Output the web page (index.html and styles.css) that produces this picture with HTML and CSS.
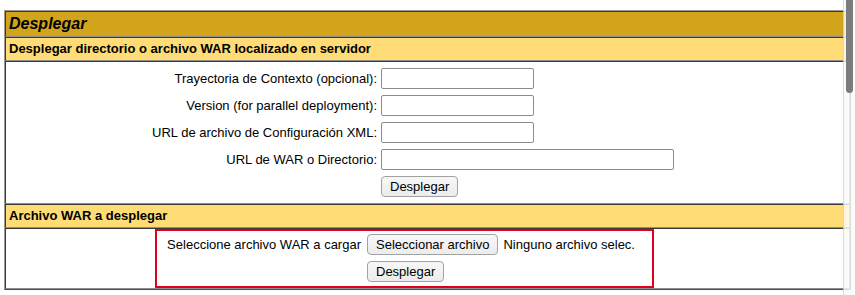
FILE: index.html
```html
<!DOCTYPE html>
<html lang="es">
<head>
    <meta charset="UTF-8">
    <meta name="viewport" content="width=device-width, initial-scale=1.0">
    <title>Gestor de Aplicaciones Web de Tomcat</title>
    <link rel="stylesheet" href="styles.css">
</head>
<body>
    <table class="manager">
        <tr><td class="title">Desplegar</td></tr>
        <tr><td class="header-left">Desplegar directorio o archivo WAR localizado en servidor</td></tr>
        <tr>
            <td class="row-body">
                <form class="fields server-form">
                    <label class="row-right" for="deployPath">Trayectoria de Contexto (opcional):</label>
                    <div class="row-left"><input type="text" id="deployPath" class="text-in"></div>
                    <label class="row-right" for="deployVersion">Version (for parallel deployment):</label>
                    <div class="row-left"><input type="text" id="deployVersion" class="text-in"></div>
                    <label class="row-right" for="deployConfig">URL de archivo de Configuración XML:</label>
                    <div class="row-left"><input type="text" id="deployConfig" class="text-in"></div>
                    <label class="row-right" for="deployWar">URL de WAR o Directorio:</label>
                    <div class="row-left"><input type="text" id="deployWar" class="text-in wide"></div>
                    <span class="row-right"></span>
                    <div class="row-left"><button type="button" class="btn">Desplegar</button></div>
                </form>
            </td>
        </tr>
        <tr><td class="header-left">Archivo WAR a desplegar</td></tr>
        <tr>
            <td class="row-body upload-cell">
                <form class="fields upload-form">
                    <span class="row-right">Seleccione archivo WAR a cargar</span>
                    <div class="row-left file-pick">
                        <button type="button" class="btn">Seleccionar archivo</button>
                        <span class="file-name">Ninguno archivo selec.</span>
                    </div>
                    <span class="row-right"></span>
                    <div class="row-left"><button type="button" class="btn">Desplegar</button></div>
                </form>
            </td>
        </tr>
    </table>

    <div class="scroll-track"><div class="scroll-thumb"></div></div>
</body>
</html>
```

FILE: styles.css
```css
body {
    margin: 10px 4px 0 4px;
    font-family: "Liberation Sans", Arial, sans-serif;
    font-size: 13px;
    color: #000;
    background: #fff;
}

.manager {
    width: 100%;
    border-collapse: separate;
    border-spacing: 0;
    border: 1px solid;
    border-color: #9a9a9a #505050 #505050 #9a9a9a;
}
.manager td {
    padding: 3px;
    border: 1px solid;
    border-color: #3a3a3a #8e8e8e #8e8e8e #3a3a3a;
    text-align: left;
    vertical-align: top;
}
td.title {
    background: #D2A41C;
    font-size: 16px;
    line-height: 18px;
    font-weight: bold;
    font-style: italic;
}
td.header-left {
    background: #FFDC75;
    font-weight: bold;
    line-height: 16px;
}
td.row-body {
    background: #fff;
}
td.upload-cell {
    padding: 0 3px 0 0;
}

.fields {
    display: grid;
    margin: 0;
}
.server-form {
    grid-template-columns: 239px 299px;
    margin-left: 132px;
}
.server-form .row-left {
    padding-left: 1px;
}
.upload-form {
    grid-template-columns: 205px auto;
    width: 493px;
    margin-left: 149px;
    padding: 0 0 1px 2px;
    border: 2px solid #e0001b;
}
.row-right,
.row-left {
    display: flex;
    align-items: center;
    height: 21px;
    padding: 3px;
}
.row-right {
    justify-content: flex-end;
}

.text-in {
    box-sizing: border-box;
    width: 153px;
    height: 21px;
    margin: 0;
    border: 1px solid #8c8c8c;
    border-radius: 2px;
    background: #fff;
}
.text-in.wide {
    width: 293px;
}

.btn {
    box-sizing: border-box;
    height: 21px;
    margin: 0;
    padding: 0 8px;
    font-family: "Liberation Sans", Arial, sans-serif;
    font-size: 13px;
    color: #000;
    background: linear-gradient(#f7f7f7, #ececec);
    border: 1px solid #a2a2a2;
    border-radius: 4px;
}
.file-pick {
    gap: 5px;
}

/* overlay scrollbar of the window */
.scroll-track {
    position: fixed;
    top: 0;
    right: 0;
    width: 11px;
    height: 100%;
    background: rgba(250, 250, 250, 0.82);
    border-left: 1px solid rgba(0, 0, 0, 0.13);
}
.scroll-thumb {
    position: absolute;
    top: 0;
    left: 2px;
    width: 7px;
    height: 93px;
    background: #7b7b7b;
    border-radius: 0 0 4px 4px;
}
```
